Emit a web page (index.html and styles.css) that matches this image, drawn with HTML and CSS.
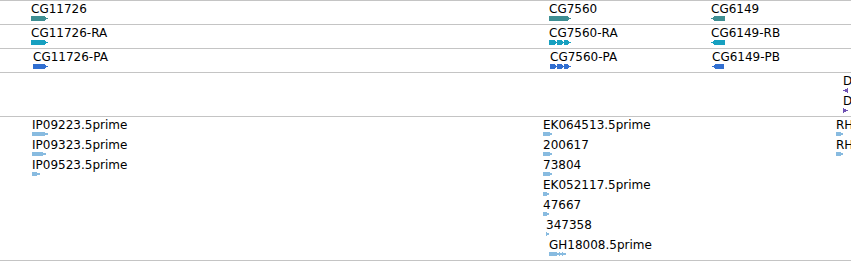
FILE: index.html
```html
<!DOCTYPE html>
<html>
<head>
<meta charset="utf-8">
<link rel="stylesheet" href="styles.css">
</head>
<body>
<div class="browser">
  <div class="track track-gene">
    <div class="feat" style="left:31px"><span class="label">CG11726</span>
      <svg class="glyph gene" width="17" height="5"><polygon points="0,0 13,0 17,2.5 13,5 0,5"/></svg></div>
    <div class="feat" style="left:549px"><span class="label">CG7560</span>
      <svg class="glyph gene" width="22" height="5"><polygon points="0,0 18,0 22,2.5 18,5 0,5"/></svg></div>
    <div class="feat" style="left:711px"><span class="label">CG6149</span>
      <svg class="glyph gene" width="14" height="5"><polygon points="0,2.5 4,0 14,0 14,5 4,5"/></svg></div>
  </div>
  <div class="track track-gene">
    <div class="feat" style="left:31px"><span class="label">CG11726-RA</span>
      <svg class="glyph mrna" width="17" height="5"><polygon points="0,0 13,0 17,2.5 13,5 0,5"/></svg></div>
    <div class="feat" style="left:549px"><span class="label">CG7560-RA</span>
      <svg class="glyph mrna" width="22" height="5"><polygon points="0,0 5,0 9,2.5 5,5 0,5"/><polygon points="8,0 12,0 16,2.5 12,5 8,5"/><polygon points="15,0 18,0 22,2.5 18,5 15,5"/></svg></div>
    <div class="feat" style="left:711px"><span class="label">CG6149-RB</span>
      <svg class="glyph mrna" width="14" height="5"><polygon points="0,2.5 4,0 14,0 14,5 4,5"/></svg></div>
  </div>
  <div class="track track-gene">
    <div class="feat" style="left:33px"><span class="label">CG11726-PA</span>
      <svg class="glyph prot" width="15" height="5"><polygon points="0,0 11,0 15,2.5 11,5 0,5"/></svg></div>
    <div class="feat" style="left:550px"><span class="label">CG7560-PA</span>
      <svg class="glyph prot" width="21" height="5"><polygon points="0,0 4,0 8,2.5 4,5 0,5"/><polygon points="7,0 11,0 15,2.5 11,5 7,5"/><polygon points="14,0 17,0 21,2.5 17,5 14,5"/></svg></div>
    <div class="feat" style="left:712px"><span class="label">CG6149-PB</span>
      <svg class="glyph prot" width="12" height="5"><polygon points="0,2.5 4,0 12,0 12,5 4,5"/></svg></div>
  </div>
  <div class="track track-d">
    <div class="feat" style="left:843px"><span class="label">D</span>
      <svg class="glyph purple" width="5" height="5"><polygon points="0,2.5 5,0 5,5"/></svg></div>
    <div class="feat" style="left:843px;top:21px"><span class="label">D</span>
      <svg class="glyph purple" width="5" height="5"><polygon points="0,0 5,2.5 0,5"/></svg></div>
  </div>
  <div class="track track-est">
    <div class="feat" style="left:32px"><span class="label">IP09223.5prime</span>
      <svg class="glyph est" width="17" height="4"><polygon points="0,0 12,0 17,2 12,4 0,4"/></svg></div>
    <div class="feat" style="left:32px;top:21px"><span class="label">IP09323.5prime</span>
      <svg class="glyph est" width="15" height="4"><polygon points="0,0 10,0 15,2 10,4 0,4"/></svg></div>
    <div class="feat" style="left:32px;top:41px"><span class="label">IP09523.5prime</span>
      <svg class="glyph est" width="9" height="4"><polygon points="0,0 4,0 9,2 4,4 0,4"/></svg></div>

    <div class="feat" style="left:543px"><span class="label">EK064513.5prime</span>
      <svg class="glyph est" width="10" height="4"><polygon points="0,0 6,0 10,2 6,4 0,4"/></svg></div>
    <div class="feat" style="left:543px;top:21px"><span class="label">200617</span>
      <svg class="glyph est" width="10" height="4"><polygon points="0,0 6,0 10,2 6,4 0,4"/></svg></div>
    <div class="feat" style="left:543px;top:41px"><span class="label">73804</span>
      <svg class="glyph est" width="10" height="4"><polygon points="0,0 6,0 10,2 6,4 0,4"/></svg></div>
    <div class="feat" style="left:543px;top:61px"><span class="label">EK052117.5prime</span>
      <svg class="glyph est" width="7" height="4"><polygon points="0,0 3,0 7,2 3,4 0,4"/></svg></div>
    <div class="feat" style="left:543px;top:81px"><span class="label">47667</span>
      <svg class="glyph est" width="7" height="4"><polygon points="0,0 3,0 7,2 3,4 0,4"/></svg></div>
    <div class="feat" style="left:546px;top:101px"><span class="label">347358</span>
      <svg class="glyph est" width="4" height="4"><polygon points="0,0 4,2 0,4"/></svg></div>
    <div class="feat" style="left:549px;top:121px"><span class="label">GH18008.5prime</span>
      <svg class="glyph est" width="18" height="4"><polygon points="0,0 7,0 11,2 7,4 0,4"/><polygon points="10,0 14,2 10,4"/><polygon points="13,0 18,2 13,4"/></svg></div>

    <div class="feat" style="left:836px"><span class="label">RH</span>
      <svg class="glyph est" width="8" height="4"><polygon points="0,0 4,0 8,2 4,4 0,4"/></svg></div>
    <div class="feat" style="left:836px;top:21px"><span class="label">RH</span>
      <svg class="glyph est" width="8" height="4"><polygon points="0,0 4,0 8,2 4,4 0,4"/></svg></div>
  </div>
</div>
</body>
</html>
```

FILE: styles.css
```css
html, body {
  margin: 0;
  padding: 0;
  background: #ffffff;
  overflow: hidden;
}

.browser {
  width: 851px;
  display: flex;
  flex-direction: column;
  font-family: "DejaVu Sans", "Liberation Sans", sans-serif;
  font-size: 12px;
  color: #000000;
}

.track {
  position: relative;
  border-top: 1px solid #c4c4c4;
  overflow: hidden;
}

.track-gene { height: 23px; }
.track-d { height: 43px; }
.track-est {
  height: 143px;
  border-bottom: 1px solid #c4c4c4;
}

.feat {
  position: absolute;
  top: 1px;
  display: flex;
  flex-direction: column;
  align-items: flex-start;
  white-space: nowrap;
}

.label {
  display: block;
  line-height: 14px;
  height: 14px;
}

.glyph {
  display: block;
  shape-rendering: crispEdges;
}

.gene { fill: #3e8f93; }
.mrna { fill: #17a0c0; }
.prot { fill: #316fd1; }
.est { fill: #88bbe0; }
.purple { fill: #6f52b3; }
```
